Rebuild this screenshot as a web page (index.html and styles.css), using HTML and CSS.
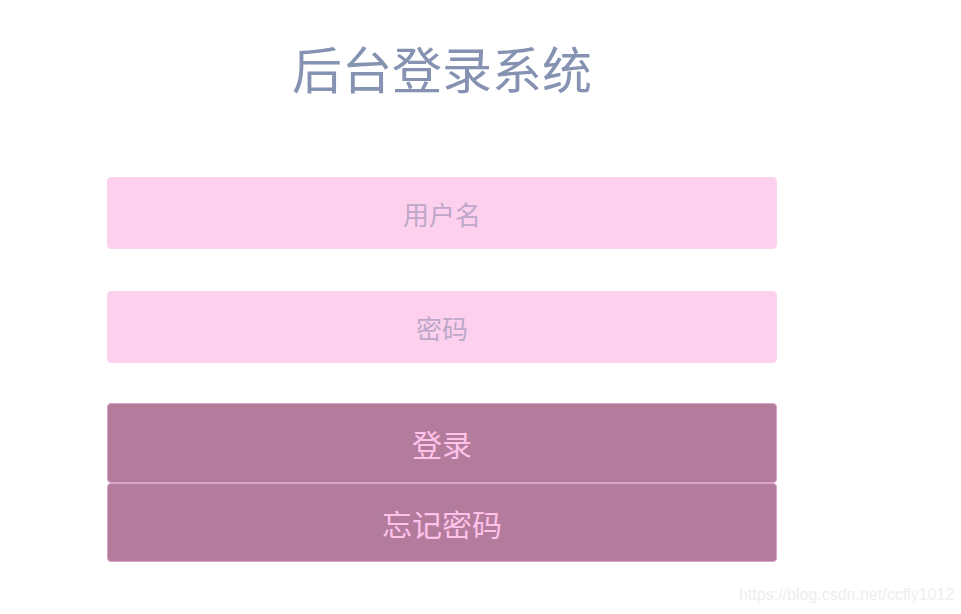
FILE: index.html
```html
<!DOCTYPE html>
<html lang="zh">
<head>
<meta charset="utf-8">
<title>后台登录系统</title>
<link rel="stylesheet" href="styles.css">
</head>
<body>
<div class="login">
  <h1 class="title">后台登录系统</h1>
  <form class="form">
    <input class="field" type="text" placeholder="用户名">
    <input class="field" type="password" placeholder="密码">
    <div class="buttons">
      <button class="btn btn-login" type="button">登录</button>
      <button class="btn" type="button">忘记密码</button>
    </div>
  </form>
</div>
<div class="watermark">https://blog.csdn.net/ccfly1012</div>
</body>
</html>
```

FILE: styles.css
```css
html, body {
  margin: 0;
  padding: 0;
  background: #ffffff;
}
body {
  width: 961px;
  height: 614px;
  position: relative;
  overflow: hidden;
  font-family: "Microsoft YaHei", "Noto Sans CJK SC", sans-serif;
}
.login {
  width: 670px;
  margin-left: 107px;
  padding-top: 36px;
}
.title {
  margin: 0;
  height: 62px;
  line-height: 62px;
  font-size: 50px;
  font-weight: normal;
  text-align: center;
  color: #8592b1;
}
.form {
  display: flex;
  flex-direction: column;
  margin-top: 79px;
}
.field {
  box-sizing: border-box;
  width: 670px;
  height: 72px;
  border: 1px solid #fcd3ee;
  border-radius: 4px;
  background: #fdd0ee;
  outline: none;
  text-align: center;
  font-family: inherit;
  font-size: 26px;
  color: #b9a6c8;
  margin-bottom: 42px;
}
.field::placeholder {
  color: #bea8c9;
}
.form .field:nth-of-type(2) {
  margin-bottom: 40px;
}
.buttons {
  display: flex;
  flex-direction: column;
}
.btn {
  box-sizing: border-box;
  width: 670px;
  height: 79px;
  border: 1px solid #d9a3c8;
  border-radius: 4px;
  background: #b37b9c;
  color: #ffc2ea;
  font-family: inherit;
  font-size: 30px;
  padding: 0;
}
.btn-login {
  height: 80px;
}
.watermark {
  position: absolute;
  left: 739px;
  top: 586px;
  font-family: "Liberation Sans", Arial, sans-serif;
  font-size: 16px;
  color: #eeeeee;
}
```
